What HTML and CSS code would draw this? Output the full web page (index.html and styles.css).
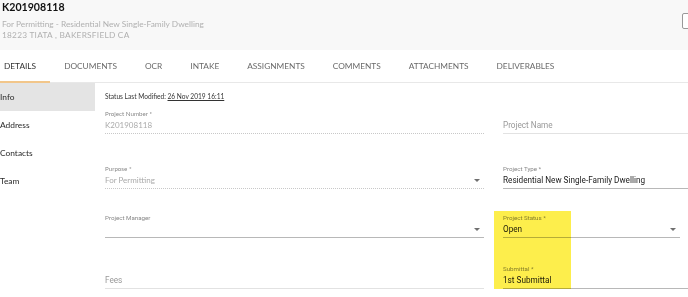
FILE: index.html
```html
<!DOCTYPE html>
<html lang="en">
<head>
  <meta charset="UTF-8">
  <title>K201908118 - Details</title>
  <link rel="stylesheet" href="styles.css">
</head>
<body>
  <!-- Project header -->
  <header class="head">
    <div class="head-text">
      <h1 class="title">K201908118</h1>
      <div class="sub">For Permitting - Residential New Single-Family Dwelling</div>
      <div class="sub addr">18223 TIATA , BAKERSFIELD CA</div>
    </div>
    <span class="head-btn"></span>
  </header>

  <!-- Tabs -->
  <nav class="tabs">
    <a class="tab active">DETAILS</a>
    <a class="tab">DOCUMENTS</a>
    <a class="tab">OCR</a>
    <a class="tab">INTAKE</a>
    <a class="tab">ASSIGNMENTS</a>
    <a class="tab">COMMENTS</a>
    <a class="tab">ATTACHMENTS</a>
    <a class="tab">DELIVERABLES</a>
  </nav>

  <div class="content">
    <aside class="side">
      <div class="side-item active">Info</div>
      <div class="side-item">Address</div>
      <div class="side-item">Contacts</div>
      <div class="side-item">Team</div>
    </aside>

    <main class="main">
      <div class="status-line">Status Last Modified: <u>26 Nov 2019 16:11</u></div>

      <div class="form">
        <div class="field disabled">
          <div class="field-label">Project Number *</div>
          <div class="field-row"><span class="field-value">K201908118</span></div>
        </div>
        <div class="field light">
          <div class="field-row"><span class="field-value placeholder">Project Name</span></div>
        </div>

        <div class="field disabled">
          <div class="field-label">Purpose *</div>
          <div class="field-row"><span class="field-value">For Permitting</span><span class="caret"></span></div>
        </div>
        <div class="field">
          <div class="field-label">Project Type *</div>
          <div class="field-row"><span class="field-value">Residential New Single-Family Dwelling</span></div>
        </div>

        <div class="field">
          <div class="field-label">Project Manager</div>
          <div class="field-row"><span class="field-value">&nbsp;</span><span class="caret"></span></div>
        </div>
        <div class="field status">
          <div class="field-label">Project Status *</div>
          <div class="field-row"><span class="field-value">Open</span><span class="caret"></span></div>
        </div>

        <div class="field light">
          <div class="field-row"><span class="field-value placeholder">Fees</span></div>
        </div>
        <div class="field">
          <div class="field-label">Submittal *</div>
          <div class="field-row"><span class="field-value">1st Submittal</span></div>
        </div>

        <!-- highlighter mark over the status fields -->
        <div class="highlight"></div>
      </div>
    </main>
  </div>
</body>
</html>
```

FILE: styles.css
```css
/* Base */
html, body {
  margin: 0;
  padding: 0;
}

body {
  width: 688px;
  height: 297px;
  overflow: hidden;
  background: #fff;
  font-family: Lato, "Liberation Sans", sans-serif;
  color: #333;
}

/* Header */
.head {
  height: 50px;
  background: #f8f8f8;
  display: flex;
  justify-content: space-between;
  padding-left: 2px;
  overflow: hidden;
}

.title {
  margin: 0;
  font-size: 10.6px;
  line-height: 15px;
  font-weight: 700;
  color: #111;
}

.sub {
  font-size: 8.3px;
  line-height: 11px;
  color: #b0b0b0;
}

.sub:first-of-type {
  margin-top: 3.5px;
}

.sub.addr {
  letter-spacing: 0.25px;
}

.head-btn {
  width: 14px;
  height: 14px;
  margin-top: 13px;
  margin-right: -10px;
  border: 1px solid #999;
  border-radius: 2px;
  background: #fff;
  flex: none;
}

/* Tabs */
.tabs {
  display: flex;
  height: 33px;
  box-sizing: border-box;
  border-bottom: 1px solid #e8e8e8;
}

.tab {
  display: flex;
  align-items: center;
  padding: 0 14px;
  font-size: 8.3px;
  color: #6a6a6a;
  border-bottom: 2px solid transparent;
  margin-bottom: -1px;
  cursor: pointer;
}

.tab:first-child {
  padding-left: 4px;
}

.tab.active {
  color: #333;
  border-bottom-color: #f2c68a;
}

/* Body */
.content {
  display: flex;
}

.side {
  width: 95px;
  flex: none;
}

.side-item {
  height: 28px;
  display: flex;
  align-items: center;
  font-size: 8.4px;
  color: #2a2a2a;
}

.side-item.active {
  background: #e4e4e4;
}

.main {
  flex: 1;
  padding-left: 10px;
}

.status-line {
  margin-top: 8px;
  font-size: 6.6px;
  line-height: 10px;
  color: #333;
}

/* Form grid */
.form {
  position: relative;
  display: grid;
  grid-template-columns: 379px 1fr;
  grid-template-rows: 33px 55px 49px 51px;
  column-gap: 19px;
}

.field {
  align-self: end;
  border-bottom: 1px solid #b8b8b8;
  padding-bottom: 1px;
  font-family: Roboto, "Liberation Sans", sans-serif;
}

.field.light {
  border-bottom-color: #e2e2e2;
}

.field.disabled {
  border-bottom: 1px dotted #c8c8c8;
}

.field.status {
  margin-right: 8px;
}

.field-label {
  font-size: 6.2px;
  line-height: 8px;
  color: #888;
}

.field-row {
  display: flex;
  align-items: center;
  justify-content: space-between;
}

.field-value {
  font-size: 8.2px;
  line-height: 14px;
  color: #222;
}

.field-value.placeholder {
  color: #999;
}

.field.disabled .field-label,
.field.disabled .field-value {
  font-family: Lato, "Liberation Sans", sans-serif;
}

.field.disabled .field-value {
  font-size: 8px;
  color: #aaa;
}

.caret {
  width: 0;
  height: 0;
  margin-right: 4px;
  border-left: 3px solid transparent;
  border-right: 3px solid transparent;
  border-top: 3px solid #6f6f6f;
}

.highlight {
  position: absolute;
  left: 389px;
  top: 110px;
  width: 77px;
  height: 78px;
  background: #fdee4c;
  mix-blend-mode: multiply;
}
```
